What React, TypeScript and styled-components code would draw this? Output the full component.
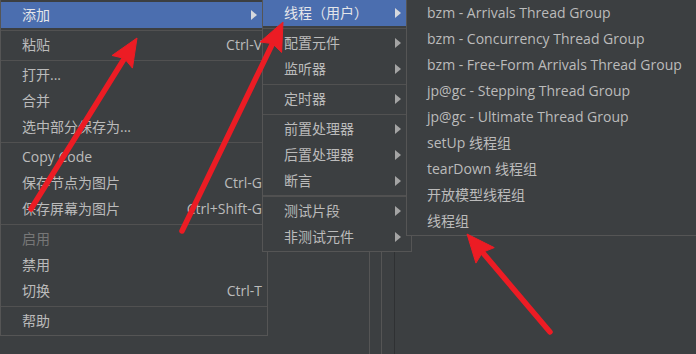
import React from 'react'
import styled, { createGlobalStyle } from 'styled-components'

type Entry =
  | { label: string; shortcut?: string; sub?: boolean; selected?: boolean; disabled?: boolean }
  | { sep: true; thick?: boolean }

const mainMenu: Entry[] = [
  { label: '添加', sub: true, selected: true },
  { sep: true },
  { label: '粘贴', shortcut: 'Ctrl-V' },
  { sep: true },
  { label: '打开...' },
  { label: '合并' },
  { label: '选中部分保存为...' },
  { sep: true },
  { label: 'Copy Code' },
  { label: '保存节点为图片', shortcut: 'Ctrl-G' },
  { label: '保存屏幕为图片', shortcut: 'Ctrl+Shift-G' },
  { sep: true },
  { label: '启用', disabled: true },
  { label: '禁用' },
  { label: '切换', shortcut: 'Ctrl-T' },
  { sep: true },
  { label: '帮助' },
]

const addMenu: Entry[] = [
  { label: '线程（用户）', sub: true, selected: true },
  { sep: true },
  { label: '配置元件', sub: true },
  { label: '监听器', sub: true },
  { sep: true },
  { label: '定时器', sub: true },
  { sep: true },
  { label: '前置处理器', sub: true },
  { label: '后置处理器', sub: true },
  { label: '断言', sub: true },
  { sep: true, thick: true },
  { label: '测试片段', sub: true },
  { label: '非测试元件', sub: true },
]

const threadMenu: Entry[] = [
  { label: 'bzm - Arrivals Thread Group' },
  { label: 'bzm - Concurrency Thread Group' },
  { label: 'bzm - Free-Form Arrivals Thread Group' },
  { label: 'jp@gc - Stepping Thread Group' },
  { label: 'jp@gc - Ultimate Thread Group' },
  { label: 'setUp 线程组' },
  { label: 'tearDown 线程组' },
  { label: '开放模型线程组' },
  { label: '线程组' },
]

// annotation arrows: [tailX, tailY, tipX, tipY]
const arrows: [number, number, number, number][] = [
  [31, 209, 137, 38],
  [182, 231, 283, 22],
  [550, 332, 467, 234],
]

const GlobalStyle = createGlobalStyle`
  html, body {
    margin: 0;
    padding: 0;
    background: #3c3f41;
    overflow: hidden;
  }
  #root {
    width: 696px;
    height: 354px;
  }
`

const Screen = styled.div`
  position: relative;
  width: 696px;
  height: 354px;
  overflow: hidden;
  display: flex;
  background: #3c3f41;
  font-family: 'Open Sans', 'Noto Sans CJK SC', sans-serif;
  font-size: 14px;
`
const Pane = styled.div<{ $width?: number; $line: string }>`
  flex: ${p => (p.$width ? `0 0 ${p.$width}px` : '1')};
  box-sizing: border-box;
  border-right: 1px solid ${p => p.$line};
`
const Popup = styled.div<{ $left: number; $top: number; $width: number; $padTop: number }>`
  position: absolute;
  left: ${p => p.$left}px;
  top: ${p => p.$top}px;
  width: ${p => p.$width}px;
  box-sizing: border-box;
  padding: ${p => p.$padTop}px 0 1px;
  background: #3c3f41;
  border: 1px solid #555555;
`
const Item = styled.div<{ $selected?: boolean; $disabled?: boolean; $indent: number }>`
  display: flex;
  align-items: center;
  height: 26px;
  padding: 0 5px 0 ${p => p.$indent}px;
  background: ${p => (p.$selected ? '#4b6eaf' : 'transparent')};
  color: ${p => (p.$disabled ? '#777777' : p.$selected ? '#e4e6ea' : '#bbbbbb')};
  white-space: nowrap;
`
const Label = styled.span`
  flex: 1;
  line-height: 26px;
`
const Shortcut = styled.span`
  margin-left: 20px;
  line-height: 26px;
`
const SubArrow = styled.span<{ $selected?: boolean }>`
  width: 0;
  height: 0;
  margin-right: 5px;
  border-top: 5px solid transparent;
  border-bottom: 5px solid transparent;
  border-left: 6px solid ${p => (p.$selected ? '#d6d9de' : '#a4a4a4')};
`
const Separator = styled.div<{ $thick?: boolean }>`
  height: ${p => (p.$thick ? 2 : 1)}px;
  margin: ${p => (p.$thick ? '1px 0 1px' : '2px 0 1px')};
  background: #515151;
`
const Marks = styled.svg`
  position: absolute;
  left: 0;
  top: 0;
  pointer-events: none;
`

const Menu = ({ items, left, top, width, padTop = 1, indent }: {
  items: Entry[]; left: number; top: number; width: number; padTop?: number; indent: number
}) => (
  <Popup $left={left} $top={top} $width={width} $padTop={padTop}>
    {items.map((it, i) =>
      'sep' in it ? (
        <Separator key={i} $thick={it.thick} />
      ) : (
        <Item key={i} $selected={it.selected} $disabled={it.disabled} $indent={indent}>
          <Label>{it.label}</Label>
          {it.shortcut && <Shortcut>{it.shortcut}</Shortcut>}
          {it.sub && <SubArrow $selected={it.selected} />}
        </Item>
      )
    )}
  </Popup>
)

const RedArrow = ({ a }: { a: [number, number, number, number] }) => {
  const [x1, y1, x2, y2] = a
  const len = Math.hypot(x2 - x1, y2 - y1)
  const ux = (x2 - x1) / len
  const uy = (y2 - y1) / len
  const bx = x2 - ux * 28
  const by = y2 - uy * 28
  const nx = -uy
  const ny = ux
  const head = [
    [x2, y2],
    [bx + nx * 12, by + ny * 12],
    [bx + ux * 4, by + uy * 4],
    [bx - nx * 12, by - ny * 12],
  ]
    .map(p => p.join(','))
    .join(' ')
  return (
    <g fill="#ec1c24" stroke="#ec1c24">
      <line x1={x1} y1={y1} x2={bx + ux * 6} y2={by + uy * 6} strokeWidth={5.5} strokeLinecap="round" />
      <polygon points={head} strokeWidth={1} strokeLinejoin="round" />
    </g>
  )
}

export default function App() {
  return (
    <>
      <GlobalStyle />
      <Screen>
        <Pane $width={370} $line="#555555" />
        <Pane $width={12} $line="#555555" />
        <Pane $width={13} $line="#2f3133" />
        <Pane $line="transparent" />

        <Menu items={mainMenu} left={0} top={-1} width={268} padTop={2} indent={21} />
        <Menu items={addMenu} left={262} top={-2} width={150} indent={21} />
        <Menu items={threadMenu} left={406} top={-2} width={310} indent={20} />

        <Marks width={696} height={354}>
          {arrows.map((a, i) => (
            <RedArrow key={i} a={a} />
          ))}
        </Marks>
      </Screen>
    </>
  )
}
